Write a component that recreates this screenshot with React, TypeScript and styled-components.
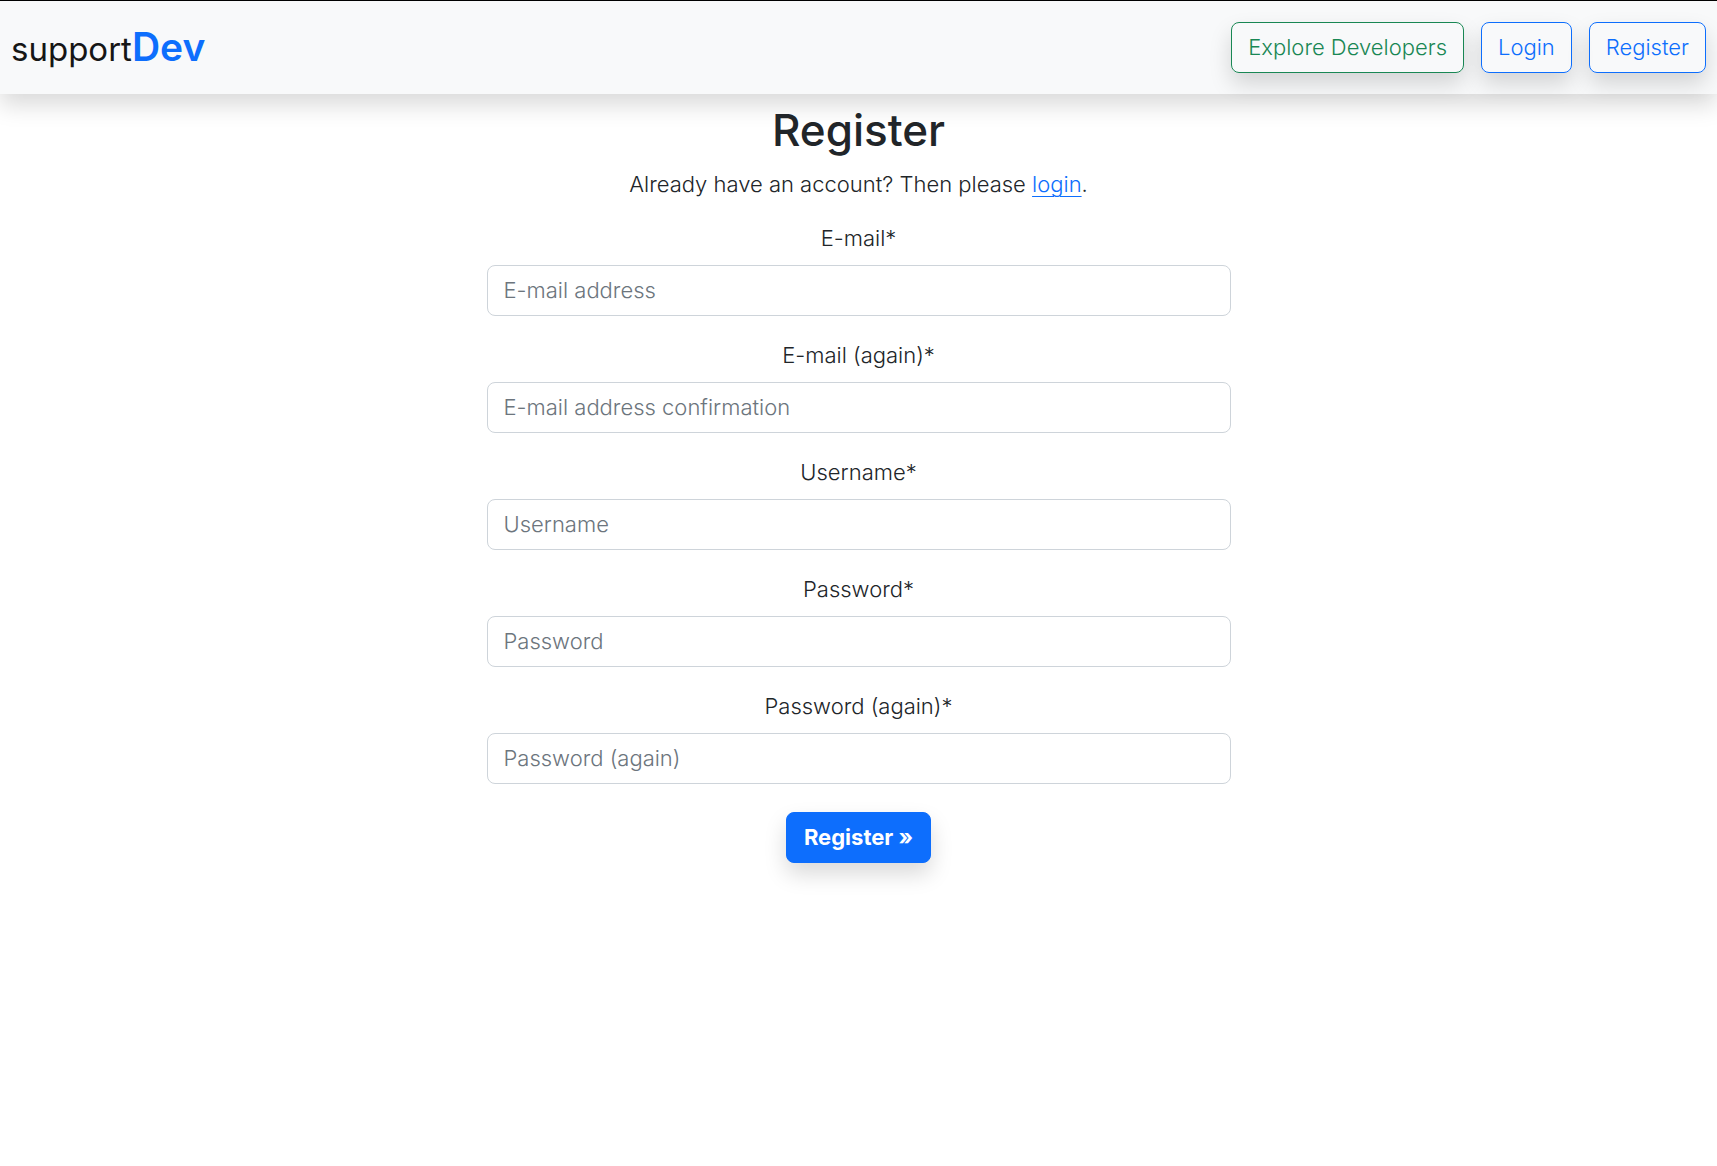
import React from "react";
import styled, { createGlobalStyle, css } from "styled-components";

const GlobalStyle = createGlobalStyle`
  *, *::before, *::after { box-sizing: border-box; }
  body {
    margin: 0;
    background: #fff;
    color: #212529;
    font-family: Inter, "Liberation Sans", sans-serif;
    font-size: 22px;
    font-weight: 300;
    line-height: 33px;
  }
`;

const raised = css`
  box-shadow: 0 11px 22px rgba(0, 0, 0, 0.15);
`;

const Navbar = styled.header`
  display: flex;
  flex-wrap: wrap;
  align-items: center;
  justify-content: space-between;
  gap: 16px;
  padding: 21px 11px;
  border-top: 1px solid #000;
  background: #f8f9fa;
  ${raised}
`;

const Brand = styled.a`
  color: #161616;
  font-size: 33px;
  font-weight: 400;
  line-height: 48px;
  text-decoration: none;

  strong {
    color: #0d6efd;
    font-size: 39px;
    font-weight: 600;
  }
`;

const NavLinks = styled.nav`
  display: flex;
  flex-wrap: wrap;
  gap: 17px;
`;

const NavButton = styled.a<{ $color: string }>`
  padding: 8px 16px;
  border: 1px solid ${(p) => p.$color};
  border-radius: 8px;
  color: ${(p) => p.$color};
  text-decoration: none;
  ${raised}
`;

const Main = styled.main`
  display: flex;
  flex-direction: column;
  align-items: center;
  padding: 10px 16px 48px;
  text-align: center;
`;

const Title = styled.h1`
  margin: 0 0 12px;
  font-size: 44px;
  font-weight: 500;
  line-height: 52px;
`;

const Intro = styled.p`
  margin: 0 0 21px;

  a {
    color: #0d6efd;
    text-decoration-thickness: 1px;
    text-underline-offset: 4px;
  }
`;

const Form = styled.form`
  display: flex;
  flex-direction: column;
  align-items: center;
  gap: 23px;
  width: 100%;
  max-width: 744px;
`;

const Field = styled.div`
  display: flex;
  flex-direction: column;
  gap: 10px;
  width: 100%;
`;

const Input = styled.input`
  width: 100%;
  padding: 8px 16px;
  border: 1px solid #ced4da;
  border-radius: 8px;
  background: #fff;
  color: #212529;
  font: inherit;

  &::placeholder {
    color: #6c757d;
    opacity: 1;
  }
`;

const Submit = styled.button`
  margin-top: 5px;
  padding: 8px 17px;
  border: 1px solid #0d6efd;
  border-radius: 8px;
  background: #0d6efd;
  color: #fff;
  font: inherit;
  font-weight: 700;
  cursor: pointer;
  ${raised}
`;

const fields = [
  { id: "email", label: "E-mail*", placeholder: "E-mail address", type: "email" },
  { id: "email2", label: "E-mail (again)*", placeholder: "E-mail address confirmation", type: "email" },
  { id: "username", label: "Username*", placeholder: "Username", type: "text" },
  { id: "password1", label: "Password*", placeholder: "Password", type: "password" },
  { id: "password2", label: "Password (again)*", placeholder: "Password (again)", type: "password" },
];

export default function App() {
  return (
    <>
      <GlobalStyle />
      <Navbar>
        <Brand href="#">
          support<strong>Dev</strong>
        </Brand>
        <NavLinks>
          <NavButton href="#" $color="#198754">Explore Developers</NavButton>
          <NavButton href="#" $color="#0d6efd">Login</NavButton>
          <NavButton href="#" $color="#0d6efd">Register</NavButton>
        </NavLinks>
      </Navbar>
      <Main>
        <Title>Register</Title>
        <Intro>
          Already have an account? Then please <a href="#">login</a>.
        </Intro>
        <Form>
          {fields.map((f) => (
            <Field key={f.id}>
              <label htmlFor={f.id}>{f.label}</label>
              <Input id={f.id} name={f.id} type={f.type} placeholder={f.placeholder} required />
            </Field>
          ))}
          <Submit type="submit">Register »</Submit>
        </Form>
      </Main>
    </>
  );
}
